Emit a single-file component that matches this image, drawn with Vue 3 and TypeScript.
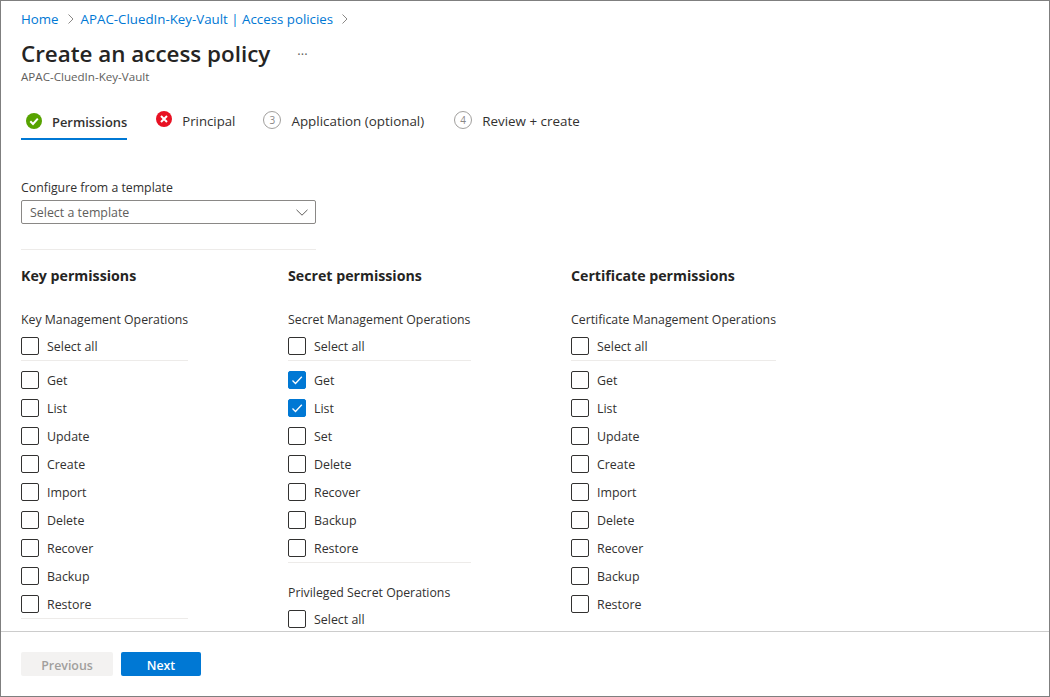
<script setup lang="ts">
interface Row { label: string; checked?: boolean }
interface Group { title: string; rows: Row[]; open?: boolean }
interface Column { heading: string; width: number; groups: Group[] }

const r = (names: string[], checked: string[] = []): Row[] =>
  names.map((label) => ({ label, checked: checked.includes(label) }))

const columns: Column[] = [
  {
    heading: 'Key permissions',
    width: 167,
    groups: [
      {
        title: 'Key Management Operations',
        rows: r(['Get', 'List', 'Update', 'Create', 'Import', 'Delete', 'Recover', 'Backup', 'Restore'])
      }
    ]
  },
  {
    heading: 'Secret permissions',
    width: 183,
    groups: [
      {
        title: 'Secret Management Operations',
        rows: r(['Get', 'List', 'Set', 'Delete', 'Recover', 'Backup', 'Restore'], ['Get', 'List'])
      },
      { title: 'Privileged Secret Operations', rows: [] }
    ]
  },
  {
    heading: 'Certificate permissions',
    width: 205,
    groups: [
      {
        title: 'Certificate Management Operations',
        open: true,
        rows: r(['Get', 'List', 'Update', 'Create', 'Import', 'Delete', 'Recover', 'Backup', 'Restore'])
      }
    ]
  }
]

const steps = [
  { n: 3, label: 'Application (optional)' },
  { n: 4, label: 'Review + create' }
]
</script>

<template>
  <div class="frame">
    <div class="main">
      <nav class="crumbs">
        <a>Home</a>
        <svg class="sep" viewBox="0 0 8 12" width="8" height="12"><path d="M1.500 1.500 6 6l-4.500 4.500" fill="none" stroke="#8a8886" stroke-width="1" /></svg>
        <a>APAC-CluedIn-Key-Vault | Access policies</a>
        <svg class="sep" viewBox="0 0 8 12" width="8" height="12"><path d="M1.500 1.500 6 6l-4.500 4.500" fill="none" stroke="#8a8886" stroke-width="1" /></svg>
      </nav>
      <div class="title-row">
        <h1>Create an access policy</h1>
        <span class="more">···</span>
      </div>
      <div class="subtitle">APAC-CluedIn-Key-Vault</div>

      <div class="tabs">
        <div class="tab active">
          <svg viewBox="0 0 16 16" width="16" height="16">
            <circle cx="8" cy="8" r="8" fill="#57a300" />
            <path d="M4.300 8.300 7 11l4.800-5.400" fill="none" stroke="#fff" stroke-width="2" />
          </svg>
          <span>Permissions</span>
        </div>
        <div class="tab">
          <svg viewBox="0 0 16 16" width="16" height="16">
            <circle cx="8" cy="8" r="8" fill="#e81123" />
            <path d="M5 5l6 6M11 5l-6 6" fill="none" stroke="#fff" stroke-width="2" />
          </svg>
          <span>Principal</span>
        </div>
        <div v-for="s in steps" :key="s.n" class="tab">
          <span class="num">{{ s.n }}</span>
          <span>{{ s.label }}</span>
        </div>
      </div>

      <label class="field-label">Configure from a template</label>
      <div class="select">
        <span>Select a template</span>
        <svg viewBox="0 0 12 7" width="12" height="7"><path d="M.5.8 6 6.200 11.500.8" fill="none" stroke="#605e5c" stroke-width="1" /></svg>
      </div>
      <div class="rule"></div>

      <div class="columns">
        <section v-for="c in columns" :key="c.heading" class="col" :style="{ width: c.width + 'px' }">
          <h2>{{ c.heading }}</h2>
          <div v-for="g in c.groups" :key="g.title" class="group">
            <div class="group-title">{{ g.title }}</div>
            <div class="row all"><span class="box"></span><span>Select all</span></div>
            <div v-if="g.rows.length" class="items" :class="{ open: g.open }">
              <div v-for="it in g.rows" :key="it.label" class="row">
                <span class="box" :class="{ on: it.checked }">
                  <svg v-if="it.checked" viewBox="0 0 12 12" width="12" height="12"><path d="M1.500 6.500 4.500 9.500 10.800 2.800" fill="none" stroke="#fff" stroke-width="1.300" /></svg>
                </span>
                <span>{{ it.label }}</span>
              </div>
            </div>
          </div>
        </section>
      </div>
    </div>
    <footer class="footer">
      <button class="btn prev" type="button">Previous</button>
      <button class="btn next" type="button">Next</button>
    </footer>
  </div>
</template>

<style>
html, body { margin: 0; padding: 0; background: #fff; }
</style>

<style scoped>
.frame {
  width: 1050px;
  height: 697px;
  box-sizing: border-box;
  border: 1px solid #7f7f7f;
  display: flex;
  flex-direction: column;
  overflow: hidden;
  font-family: "Open Sans", "Noto Sans", sans-serif;
  font-size: 12.400px;
  color: #323130;
  background: #fff;
}
.main {
  flex: 1;
  min-height: 0;
  overflow: hidden;
  padding: 0 20px;
}
.crumbs {
  display: flex;
  align-items: center;
  height: 18px;
  margin-top: 9px;
  color: #0078d4;
  font-size: 13.300px;
}
.sep { margin: 0 6px 0 8px; }
.title-row {
  display: flex;
  align-items: center;
  height: 36px;
  margin-top: 8px;
}
h1 {
  margin: 0;
  font-size: 22.400px;
  font-weight: 600;
  color: #252423;
  line-height: 36px;
}
.more {
  margin-left: 27px;
  font-size: 13px;
  color: #605e5c;
}
.subtitle {
  font-size: 11.600px;
  line-height: 14px;
  color: #605e5c;
  margin-top: -2px;
}
.tabs {
  display: flex;
  margin-top: 17px;
  height: 41px;
}
.tab {
  display: flex;
  align-items: flex-start;
  gap: 10px;
  height: 39px;
  margin-right: 30px;
  padding-top: 11px;
  box-sizing: border-box;
  font-size: 13.400px;
  line-height: 18px;
  color: #323130;
}
.tab:nth-child(2) { margin-left: 8px; margin-right: 28px; font-size: 13.200px; }
.tab svg { flex: none; }
.tab:not(.active) svg, .num { margin-top: -1px; }
.tab.active {
  border-bottom: 2px solid #0078d4;
  padding-left: 5px;
  margin-right: 21px;
  font-size: 12.900px;
  font-weight: 600;
  padding-top: 12px;
}
.num {
  width: 18px;
  height: 18px;
  box-sizing: border-box;
  border: 1px solid #a19f9d;
  border-radius: 50%;
  font-size: 10px;
  line-height: 16px;
  text-align: center;
  color: #8a8886;
  flex: none;
}
.field-label {
  display: block;
  margin-top: 37px;
  height: 18px;
  line-height: 18px;
  font-size: 12.300px;
}
.select {
  width: 295px;
  height: 24px;
  box-sizing: border-box;
  margin-top: 3px;
  border: 1px solid #8a8886;
  border-radius: 2px;
  display: flex;
  align-items: center;
  justify-content: space-between;
  padding: 0 7px 0 8px;
  color: #605e5c;
}
.rule {
  width: 295px;
  height: 1px;
  background: #edebe9;
  margin-top: 25px;
}
.columns {
  display: flex;
  gap: 100px;
  margin-top: 16px;
}
.col { flex: none; }
h2 {
  margin: 0 0 25px;
  font-size: 14.200px;
  font-weight: 700;
  line-height: 20px;
  color: #252423;
}
.group-title {
  line-height: 18px;
  height: 18px;
  font-size: 12.300px;
  white-space: nowrap;
}
.row {
  display: flex;
  align-items: center;
  gap: 8px;
  height: 28px;
  white-space: nowrap;
}
.all { margin-top: 3px; }
.items {
  border-top: 1px solid #edebe9;
  border-bottom: 1px solid #edebe9;
  padding: 5px 0 0;
  margin-bottom: 21px;
}
.items.open { border-bottom-color: transparent; }
.box {
  width: 18px;
  height: 18px;
  box-sizing: border-box;
  border: 1px solid #323130;
  border-radius: 2px;
  flex: none;
  display: flex;
  align-items: center;
  justify-content: center;
}
.box.on {
  background: #0078d4;
  border-color: #0078d4;
}
.footer {
  flex: none;
  height: 65px;
  box-sizing: border-box;
  border-top: 1px solid #ccc;
  padding: 20px 20px 0;
  display: flex;
  gap: 8px;
  align-items: flex-start;
}
.btn {
  height: 24px;
  border: none;
  border-radius: 2px;
  font-family: inherit;
  font-size: 12.400px;
  font-weight: 600;
  padding: 2px 0 0;
}
.prev { width: 92px; background: #f3f2f1; color: #a19f9d; }
.next { width: 80px; background: #0078d4; color: #fff; }
</style>
